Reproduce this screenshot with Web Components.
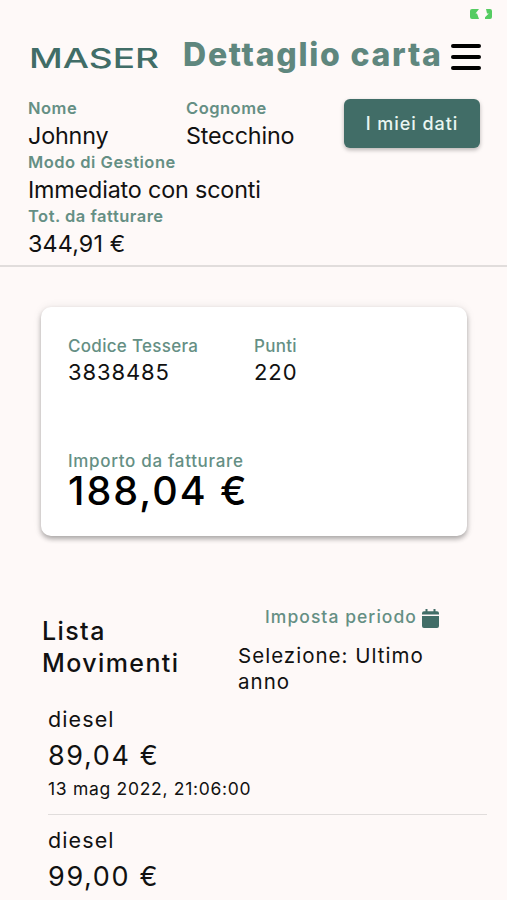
<!DOCTYPE html>
<html lang="it">
<head>
<meta charset="UTF-8">
<meta name="viewport" content="width=device-width, initial-scale=1">
<title>Dettaglio carta</title>
<style>
:root {
    --bg: #fef9f8;
    --green: #416d67;
    --green-light: #658f84;
    --line: #e1dddc;
}

body {
    margin: 0;
    height: 900px;
    overflow: hidden;
    background-color: var(--bg);
    color: #111;
    font-family: Inter, "Liberation Sans", sans-serif;
}
</style>
</head>
<body>
<card-page></card-page>

<script>
const define = (name, html) => {
    const template = document.createElement('template')
    template.innerHTML = html

    customElements.define(name, class extends HTMLElement {
        constructor() {
            super()
            this.attachShadow({mode: 'open'})
            this.shadowRoot.appendChild(template.content.cloneNode(true))
        }
    })
}

define('status-bar', `
<style>
:host {
    display: flex;
    justify-content: flex-end;
    box-sizing: border-box;
    height: 28px;
    padding: 9px 15px 0 0;
}
svg { display: block; }
</style>
<svg width="22" height="11" viewBox="0 0 22 11" fill="#55cc62">
    <path d="M2 0H9L5.500 4.500H7L9 10H2Q0 10 0 8V2Q0 0 2 0Z"/>
    <path d="M16 0H20Q22 0 22 2V8Q22 10 20 10H15V8.300L18.800 4.500H17Z"/>
</svg>
`)

define('brand-logo', `
<style>
:host { display: block; }
svg { display: block; }
text {
    font-family: Inter, sans-serif;
    font-size: 27px;
    font-weight: 500;
    fill: var(--green);
}
</style>
<svg width="132" height="36" viewBox="0 0 132 36">
    <text x="0" y="27.500" textLength="130" lengthAdjust="spacingAndGlyphs">MASER</text>
</svg>
`)

define('menu-button', `
<style>
:host { display: block; }
button {
    display: flex;
    flex-direction: column;
    justify-content: space-between;
    width: 30px;
    height: 26px;
    padding: 0;
    border: none;
    background: none;
}
span {
    height: 4px;
    border-radius: 2px;
    background-color: #000;
}
</style>
<button aria-label="Menu"><span></span><span></span><span></span></button>
`)

define('app-header', `
<style>
:host {
    display: flex;
    align-items: flex-start;
    box-sizing: border-box;
    height: 67px;
    padding: 0 26px 0 29px;
}
brand-logo { padding-top: 12px; }
h1 {
    flex: 1;
    margin: 0 0 0 22px;
    padding-top: 7px;
    line-height: 40px;
    font-size: 32px;
    font-weight: 800;
    letter-spacing: 1.75px;
    white-space: nowrap;
    color: #5f877e;
}
menu-button { padding-top: 16px; }
</style>
<brand-logo></brand-logo>
<h1><slot></slot></h1>
<menu-button></menu-button>
`)

define('info-field', `
<style>
:host { display: block; white-space: nowrap; }
.label {
    line-height: var(--label-line, 26px);
    font-size: var(--label-size, 16.5px);
    font-weight: var(--label-weight, 600);
    letter-spacing: var(--label-spacing, .5px);
    color: var(--green-light);
}
.value {
    line-height: var(--value-line, 28px);
    font-size: var(--value-size, 23.3px);
    font-weight: var(--value-weight, 400);
    letter-spacing: var(--value-spacing, -.15px);
}
</style>
<div class="label"><slot name="label"></slot></div>
<div class="value"><slot></slot></div>
`)

define('app-button', `
<style>
:host { display: block; }
button {
    display: block;
    width: 136px;
    height: 49px;
    padding: 0;
    border: none;
    border-radius: 6px;
    background-color: var(--green);
    color: #e9f6f2;
    font: 500 18px/49px Inter, sans-serif;
    letter-spacing: .95px;
    box-shadow: 0 2px 4px rgba(0, 0, 0, .28);
}
</style>
<button><slot></slot></button>
`)

define('customer-info', `
<style>
:host {
    display: grid;
    grid-template-columns: 158px 158px 1fr;
    grid-template-rows: 54px 54px 54px;
    align-items: start;
    box-sizing: border-box;
    height: 172px;
    padding: 0 27px 0 28px;
    border-bottom: 2px solid var(--line);
    --label-line: 27px;
    --value-line: 27px;
}
app-button { margin-top: 4px; }
.wide { grid-column: 1 / -1; }
.amount { --value-spacing: .15px; }
</style>
<info-field><span slot="label">Nome</span>Johnny</info-field>
<info-field><span slot="label">Cognome</span>Stecchino</info-field>
<app-button>I miei dati</app-button>
<info-field class="wide"><span slot="label">Modo di Gestione</span>Immediato con sconti</info-field>
<info-field class="wide amount"><span slot="label">Tot. da fatturare</span>344,91 €</info-field>
`)

define('fuel-card', `
<style>
:host {
    display: grid;
    grid-template-columns: 186px 1fr;
    grid-template-rows: 115px auto;
    box-sizing: border-box;
    width: 426px;
    height: 229px;
    margin: 40px 0 0 41px;
    padding: 26px 27px 0;
    border-radius: 10px;
    background-color: #fff;
    box-shadow: 0 3px 5px rgba(0, 0, 0, .3), 0 0 10px rgba(0, 0, 0, .08);
}
info-field {
    --label-size: 17px;
    --label-weight: 500;
    --label-spacing: .3px;
    --value-size: 22px;
    --value-line: 26px;
    --value-spacing: .9px;
}
.total {
    grid-column: 1 / -1;
    --label-spacing: .68px;
    --value-size: 39.5px;
    --value-line: 35px;
    --value-weight: 500;
    --value-spacing: 2px;
    color: #000;
}
</style>
<info-field><span slot="label">Codice Tessera</span>3838485</info-field>
<info-field><span slot="label">Punti</span>220</info-field>
<info-field class="total"><span slot="label">Importo da fatturare</span>188,04 €</info-field>
`)

define('period-picker', `
<style>
:host { display: block; }
.action {
    display: flex;
    gap: 5px;
    padding-left: 27px;
    line-height: 24px;
    font-size: 17.5px;
    font-weight: 500;
    letter-spacing: 1.05px;
    color: var(--green-light);
    white-space: nowrap;
}
svg { margin-top: 4px; fill: var(--green); }
p {
    width: 200px;
    margin: 14px 0 0;
    line-height: 25.5px;
    font-size: 20.5px;
    letter-spacing: 1.02px;
}
</style>
<div class="action">
    Imposta periodo
    <svg width="17" height="19" viewBox="0 0 17 19">
        <path d="M3.500 0h2v2.300h6V0h2v2.300H15a2 2 0 0 1 2 2V5.500H0V4.300a2 2 0 0 1 2-2h1.500zM0 7h17v10a2 2 0 0 1-2 2H2a2 2 0 0 1-2-2z"/>
    </svg>
</div>
<p><slot></slot></p>
`)

define('movement-item', `
<style>
:host {
    display: block;
    box-sizing: border-box;
    height: 121px;
    padding-top: 10px;
    border-bottom: 1px solid var(--line);
    white-space: nowrap;
}
.product {
    line-height: 31px;
    font-size: 21.5px;
    letter-spacing: 1.1px;
}
.amount {
    line-height: 41px;
    font-size: 27px;
    letter-spacing: 1.65px;
}
.date {
    line-height: 26px;
    font-size: 17.5px;
    letter-spacing: .7px;
}
</style>
<div class="product"><slot></slot></div>
<div class="amount"><slot name="amount"></slot></div>
<div class="date"><slot name="date"></slot></div>
`)

define('movement-list', `
<style>
:host { display: block; padding: 69px 20px 0 42px; }
header {
    display: flex;
    height: 89px;
}
h2 {
    width: 196px;
    margin: 10px 0 0;
    line-height: 32px;
    font-size: 25px;
    font-weight: 500;
    letter-spacing: 1.4px;
}
.items { padding-left: 6px; }
</style>
<header>
    <h2>Lista<br>Movimenti</h2>
    <period-picker>Selezione: Ultimo anno</period-picker>
</header>
<div class="items"><slot></slot></div>
`)

define('card-page', `
<style>
:host { display: block; }
</style>
<status-bar></status-bar>
<app-header>Dettaglio carta</app-header>
<customer-info></customer-info>
<fuel-card></fuel-card>
<movement-list>
    <movement-item>diesel<span slot="amount">89,04 €</span><span slot="date">13 mag 2022, 21:06:00</span></movement-item>
    <movement-item>diesel<span slot="amount">99,00 €</span></movement-item>
</movement-list>
`)
</script>
</body>
</html>
